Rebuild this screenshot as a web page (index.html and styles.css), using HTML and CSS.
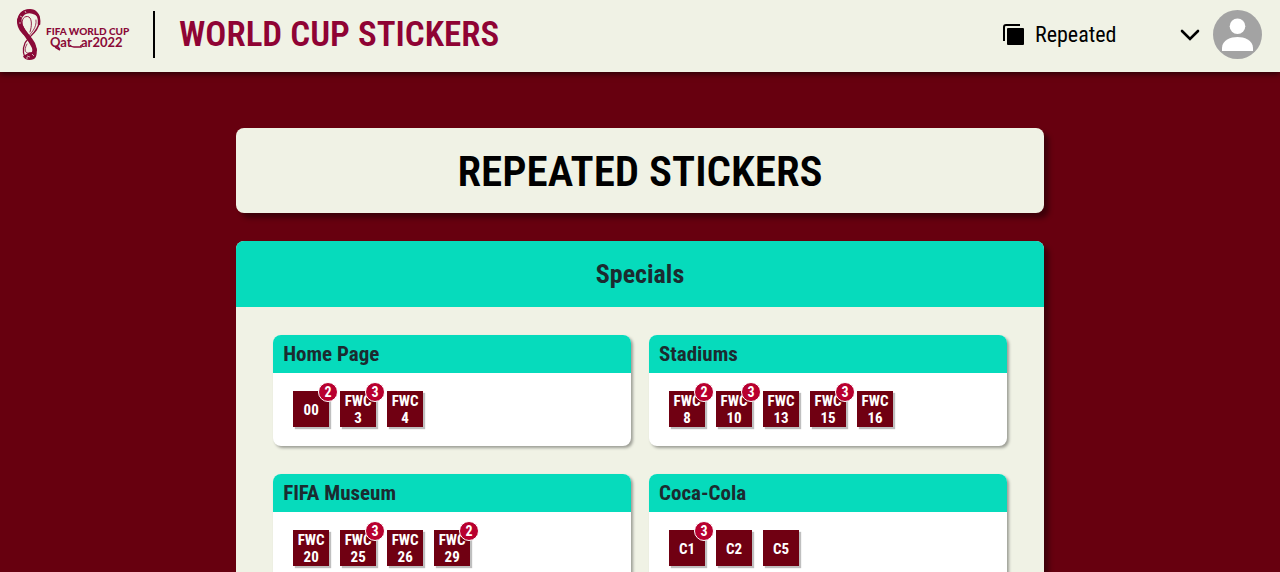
FILE: index.html
```html
<!DOCTYPE html>
<html lang="en">
<head>
<meta charset="utf-8">
<meta name="viewport" content="width=device-width, initial-scale=1">
<title>World Cup Stickers</title>
<link rel="stylesheet" href="styles.css">
</head>
<body>
<header class="topbar">
  <a class="brand" href="#" aria-label="FIFA World Cup Qatar 2022">
    <svg class="brand-logo" viewBox="0 0 116 54" width="116" height="54">
      <g fill="none" stroke="#8a0a38" stroke-linecap="round" stroke-linejoin="round">
        <path d="M3 12C4 22 15 31 19 42" stroke-width="4"/>
        <path d="M3 12C4 4 10 2 14 3C20 3 24 8 23 16" stroke-width="2.6"/>
        <path d="M23 14C23 23 13 28 9 35C6 42 7 49 12 50" stroke-width="1.3"/>
        <path d="M20 12C21 20 15 25 11 30" stroke-width=".8"/>
        <path d="M7 19C4 11 9 7 13 9C16 11 16 18 14 24" stroke-width=".9"/>
        <path d="M11 36C7 43 10 46 14 45" stroke-width=".8"/>
      </g>
      <path fill="#8a0a38" d="M1 13C2 5 7 1 14 1C20 1 24 6 24 11C20 6 14 4 10 6C6 8 4 12 7 18C10 24 16 29 19 35C22 42 21 50 18 51C14 53 8 52 7 48C10 47 12 44 16 44C18 38 14 33 9 28C3 23 1 18 1 13Z"/>
      <path fill="none" stroke="#f0f2e5" stroke-width=".7" d="M4 8L6 9M9 3L10 5M3 15H5M11 48L14 49M16 46L18 48M10 50H12"/>
      <text class="logo-line" x="30" y="27" font-size="10" font-weight="900">FIFA WORLD CUP</text>
      <text class="logo-line" x="34" y="39" font-size="13" font-weight="700">Qat</text>
      <text class="logo-line" x="65" y="39" font-size="13" font-weight="700">ar2022</text>
      <path fill="none" stroke="#8a0a38" stroke-width="1.5" d="M39 39L44 42M54 37Q55 39 58 39H65V37"/>
    </svg>
  </a>
  <h1 class="site-title">WORLD CUP STICKERS</h1>
  <label class="view-picker">
    <svg viewBox="0 0 22 22" width="22" height="22" aria-hidden="true">
      <path d="M1 17V3Q1 1 3 1H17" fill="none" stroke="#000" stroke-width="2"/>
      <rect x="4" y="4" width="17" height="17" rx="1"/>
    </svg>
    <select class="view-select" aria-label="View">
      <option>Repeated</option>
    </select>
    <svg viewBox="0 0 20 12" width="20" height="12" aria-hidden="true">
      <path d="M2 2L10 10L18 2" fill="none" stroke="#000" stroke-width="2.6" stroke-linecap="round" stroke-linejoin="miter"/>
    </svg>
  </label>
  <button class="avatar" type="button" aria-label="Account">
    <svg viewBox="0 0 49 49" width="49" height="49">
      <circle cx="24.5" cy="24.5" r="24.5" fill="#a3a3a3"/>
      <circle cx="24.5" cy="16.3" r="7.8" fill="#fff"/>
      <path fill="#fff" d="M9 41V38C9 30 18 27 24.5 27S40 30 40 38V41Z"/>
    </svg>
  </button>
</header>

<main class="page">
  <h2 class="page-title">REPEATED STICKERS</h2>
  <section class="panel">
    <h3 class="panel-title">Specials</h3>
    <div class="groups">
      <article class="group">
        <h4 class="group-title">Home Page</h4>
        <ul class="stickers">
          <li class="sticker">00<span class="count">2</span></li>
          <li class="sticker">FWC<br>3<span class="count">3</span></li>
          <li class="sticker">FWC<br>4</li>
        </ul>
      </article>
      <article class="group">
        <h4 class="group-title">Stadiums</h4>
        <ul class="stickers">
          <li class="sticker">FWC<br>8<span class="count">2</span></li>
          <li class="sticker">FWC<br>10<span class="count">3</span></li>
          <li class="sticker">FWC<br>13</li>
          <li class="sticker">FWC<br>15<span class="count">3</span></li>
          <li class="sticker">FWC<br>16</li>
        </ul>
      </article>
      <article class="group">
        <h4 class="group-title">FIFA Museum</h4>
        <ul class="stickers">
          <li class="sticker">FWC<br>20</li>
          <li class="sticker">FWC<br>25<span class="count">3</span></li>
          <li class="sticker">FWC<br>26</li>
          <li class="sticker">FWC<br>29<span class="count">2</span></li>
        </ul>
      </article>
      <article class="group">
        <h4 class="group-title">Coca-Cola</h4>
        <ul class="stickers">
          <li class="sticker">C1<span class="count">3</span></li>
          <li class="sticker">C2</li>
          <li class="sticker">C5</li>
        </ul>
      </article>
    </div>
  </section>
</main>
</body>
</html>
```

FILE: styles.css
```css
* { box-sizing: border-box; }

html { scrollbar-width: none; }

body {
  margin: 0;
  background: #67000f;
  color: #000;
  font-family: "Roboto Condensed", Roboto, sans-serif;
}

h1, h2, h3, h4, ul { margin: 0; padding: 0; }

.topbar {
  display: flex;
  align-items: center;
  height: 72px;
  padding: 0 18px 3px 16px;
  background: #f0f2e5;
  box-shadow: 0 2px 6px rgba(0, 0, 0, 0.6);
}

.brand {
  display: flex;
  align-items: center;
  height: 47px;
  padding-right: 21px;
  border-right: 2px solid #000;
}

.brand-logo { overflow: visible; flex: none; }

.logo-line { font-family: Lato, sans-serif; fill: #8a0a38; }

.site-title {
  flex: 1;
  padding-left: 24px;
  color: #8f0334;
  font-size: 35px;
  font-weight: 600;
  line-height: 40px;
}

.view-picker {
  display: flex;
  align-items: center;
  margin-right: 13px;
}

.view-select {
  width: 145px;
  margin-left: 10px;
  padding: 0;
  border: 0;
  background: none;
  appearance: none;
  color: #000;
  font-family: inherit;
  font-size: 22px;
  line-height: 28px;
}

.avatar {
  display: flex;
  padding: 0;
  border: 0;
  border-radius: 50%;
  background: none;
}

.page {
  display: grid;
  gap: 28px;
  width: 63.1%;
  margin: 0 auto;
  padding: 56px 0;
}

.page-title {
  padding: 19px 18px 17px;
  border-radius: 8px;
  background: #f0f2e5;
  box-shadow: 5px 5px 5px rgba(0, 0, 0, 0.4);
  font-size: 43px;
  font-weight: 600;
  line-height: 49px;
  text-align: center;
}

.panel {
  border-radius: 8px;
  background: #f0f2e5;
  box-shadow: 5px 5px 5px rgba(0, 0, 0, 0.4);
}

.panel-title {
  padding: 16px;
  border-radius: 8px 8px 0 0;
  background: #06dbbc;
  color: #1b2b30;
  font-size: 26px;
  line-height: 34px;
  text-align: center;
}

.groups {
  display: grid;
  grid-template-columns: 1fr 1fr;
  gap: 28px 18px;
  padding: 28px 37px;
}

.group {
  border-radius: 8px;
  background: #fff;
  box-shadow: 2px 2px 3px rgba(0, 0, 0, 0.35);
}

.group-title {
  padding: 5px 10px;
  border-radius: 8px 8px 0 0;
  background: #06dbbc;
  color: #1b2b30;
  font-size: 21px;
  line-height: 28px;
}

.stickers {
  display: flex;
  flex-wrap: wrap;
  gap: 11px;
  padding: 18px 20px 19px;
  list-style: none;
}

.sticker {
  position: relative;
  display: grid;
  place-content: center;
  width: 36px;
  height: 36px;
  padding-top: 2px;
  background: #700012;
  box-shadow: 2px 2px 1px rgba(0, 0, 0, 0.25);
  color: #fff;
  font-size: 15px;
  font-weight: 700;
  line-height: 17px;
  text-align: center;
}

.count {
  position: absolute;
  top: -9px;
  right: -9px;
  width: 20px;
  height: 20px;
  border: 1px solid #fff;
  border-radius: 50%;
  background: #b8002f;
  font-size: 14px;
  line-height: 18px;
}
```
